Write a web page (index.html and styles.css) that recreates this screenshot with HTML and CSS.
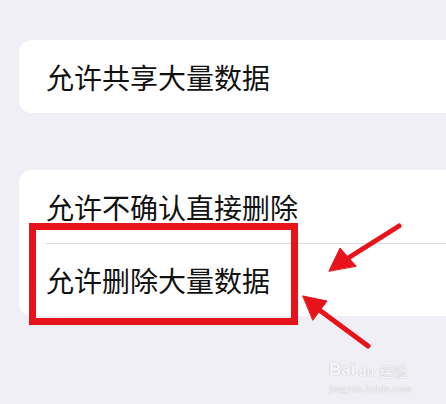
FILE: index.html
```html
<!DOCTYPE html>
<html lang="zh-CN">
<head>
    <meta charset="UTF-8">
    <meta name="viewport" content="width=device-width, initial-scale=1.0">
    <title>iCloud 设置</title>
    <link rel="stylesheet" href="styles.css">
</head>
<body>
    <div class="settings">
        <!-- Share group -->
        <div class="group">
            <div class="row">允许共享大量数据</div>
        </div>

        <!-- Delete group -->
        <div class="group">
            <div class="row">允许不确认直接删除</div>
            <div class="row">允许删除大量数据</div>
        </div>
    </div>

    <!-- Annotation marks -->
    <div class="mark-box"></div>
    <svg class="mark-arrows" width="446" height="404" viewBox="0 0 446 404">
        <g stroke="#e8121a" stroke-width="5" stroke-linecap="round" fill="#e8121a">
            <line x1="399" y1="226" x2="345" y2="260"/>
            <polygon points="329,271 340,248 356,266" stroke-width="1"/>
            <line x1="368" y1="346" x2="318" y2="309"/>
            <polygon points="303,296 327,301 313,320" stroke-width="1"/>
        </g>
    </svg>

    <div class="watermark">
        <span class="wm-logo">Bai<span class="wm-paw">du</span><span class="wm-cn">经验</span></span>
        <span class="wm-url">jingyan.baidu.com</span>
    </div>
</body>
</html>
```

FILE: styles.css
```css
* {
    margin: 0;
    padding: 0;
    box-sizing: border-box;
}

body {
    background-color: #f0eff5;
    font-family: "Noto Sans CJK SC", "Noto Sans", sans-serif;
    color: #111;
    width: 446px;
    height: 404px;
    overflow: hidden;
    position: relative;
}

.settings {
    padding-top: 40px;
}

.group {
    background: #fff;
    border-radius: 13px;
    margin: 0 -20px 57px 19px;
    overflow: hidden;
}

.row {
    height: 73px;
    margin-left: 27px;
    display: flex;
    align-items: center;
    font-size: 28px;
    line-height: 1;
}

.row + .row {
    border-top: 1px solid #dcdce0;
}

.mark-box {
    position: absolute;
    left: 29px;
    top: 223px;
    width: 269px;
    height: 102px;
    border: 7px solid #e8121a;
}

.mark-arrows {
    position: absolute;
    left: 0;
    top: 0;
}

/* faint site stamp, bottom right */
.watermark {
    position: absolute;
    left: 329px;
    top: 361px;
    display: flex;
    flex-direction: column;
    align-items: flex-start;
    color: rgba(255, 255, 255, 0.9);
    text-shadow: 0 0 1px #c2c2c8, 0 0 1px #c2c2c8;
    font-family: "Liberation Sans", sans-serif;
    line-height: 1;
}

.wm-logo {
    font-size: 17px;
    font-weight: bold;
    display: flex;
    align-items: flex-end;
}

.wm-paw {
    font-size: 13px;
    margin: 0 5px 0 3px;
}

.wm-cn {
    font-family: "Noto Sans CJK SC", sans-serif;
    font-size: 14px;
    font-weight: normal;
}

.wm-url {
    margin-top: 6px;
    font-family: "Liberation Serif", serif;
    font-size: 10px;
    letter-spacing: 0.5px;
}
```
